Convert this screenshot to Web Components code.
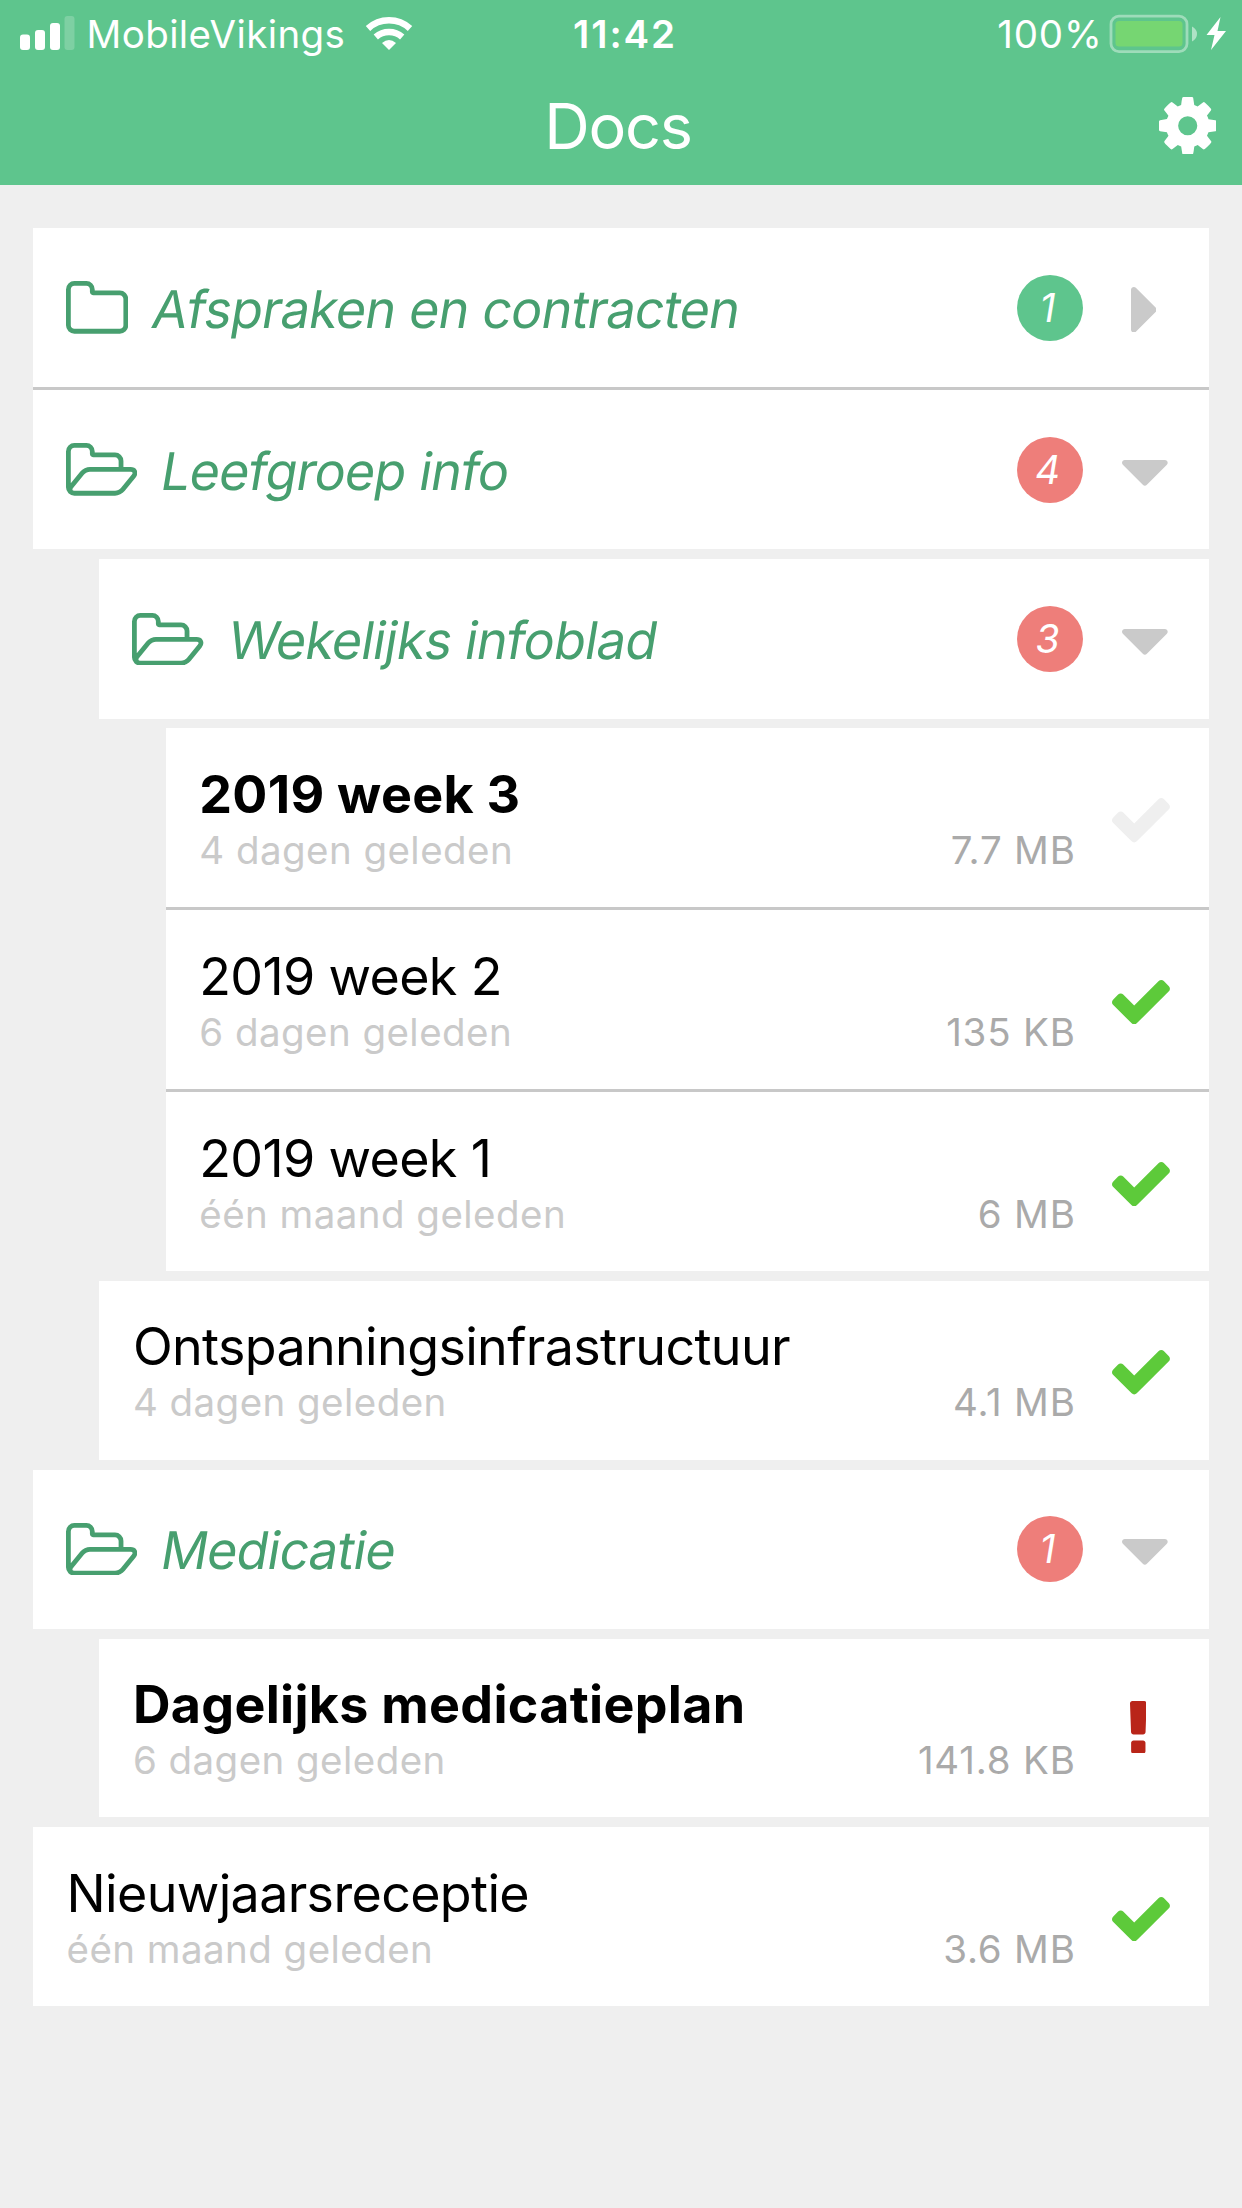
<!DOCTYPE html>
<html lang="nl">
<head>
<meta charset="utf-8">
<title>Docs</title>
<style>
    body {
        margin: 0;
        min-height: 2208px;
        background: #efefef;
        font-family: Inter, "Liberation Sans", sans-serif;
    }
</style>
</head>
<body>

<status-bar carrier="MobileVikings" time="11:42" battery="100%"></status-bar>
<title-bar>Docs</title-bar>

<doc-list>
    <doc-folder name="Afspraken en contracten" count="1" seen line></doc-folder>
    <doc-folder name="Leefgroep info" count="4" open>
        <doc-folder name="Wekelijks infoblad" count="3" open>
            <doc-file name="2019 week 3" age="4 dagen geleden" size="7.7 MB" state="new" unread line></doc-file>
            <doc-file name="2019 week 2" age="6 dagen geleden" size="135 KB" state="read" line></doc-file>
            <doc-file name="2019 week 1" age="één maand geleden" size="6 MB" state="read"></doc-file>
        </doc-folder>
        <doc-file name="Ontspanningsinfrastructuur" age="4 dagen geleden" size="4.1 MB" state="read"></doc-file>
    </doc-folder>
    <doc-folder name="Medicatie" count="1" open>
        <doc-file name="Dagelijks medicatieplan" age="6 dagen geleden" size="141.8 KB" state="urgent" unread></doc-file>
    </doc-folder>
    <doc-file name="Nieuwjaarsreceptie" age="één maand geleden" size="3.6 MB" state="read"></doc-file>
</doc-list>

<script>
// viewBox is cropped to the glyph, so the size follows from --em
const icons = {
    cog: [128, 128, 1536, 1536, 'M1152 896q0-106-75-181t-181-75-181 75-75 181 75 181 181 75 181-75 75-181zm512-109v222q0 12-8 23t-20 13l-185 28q-19 54-39 91 35 50 107 138 10 12 10 25t-9 23q-27 37-99 108t-94 71q-12 0-26-9l-138-108q-44 23-91 38-16 136-29 186-7 28-36 28h-222q-14 0-24.5-8.5t-11.5-21.5l-28-184q-49-16-90-37l-141 107q-10 9-25 9-14 0-25-11-126-114-165-168-7-10-7-23 0-12 8-23 15-21 51-66.5t54-70.5q-27-50-41-99l-183-27q-13-2-21-12.5t-8-23.5v-222q0-12 8-23t19-13l186-28q14-46 39-92-40-57-107-138-10-12-10-24 0-10 9-23 26-36 98.5-107.5t94.5-71.5q13 0 26 10l138 107q44-23 91-38 16-136 29-186 7-28 36-28h222q14 0 24.5 8.5t11.5 21.5l28 184q49 16 90 37l142-107q9-9 24-9 13 0 25 10 129 119 165 170 7 8 7 22 0 12-8 23-15 21-51 66.5t-54 70.5q26 50 41 98l183 28q13 2 21 12.5t8 23.5z'],
    folder: [64, 128, 1664, 1408, 'M1600 1312v-704q0-40-28-68t-68-28h-704q-40 0-68-28t-28-68v-64q0-40-28-68t-68-28h-320q-40 0-68 28t-28 68v960q0 40 28 68t68 28h1216q40 0 68-28t28-68zm128-704v704q0 92-66 158t-158 66h-1216q-92 0-158-66t-66-158v-960q0-92 66-158t158-66h320q92 0 158 66t66 158v32h672q92 0 158 66t66 158z'],
    folderOpen: [64, 128, 1909, 1408, 'M1845 931q0-35-53-35h-1088q-40 0-85.5 21.5t-71.5 52.5l-294 363q-18 24-18 40 0 35 53 35h1088q40 0 86-22t71-53l294-363q18-22 18-39zm-1141-163h768v-160q0-40-28-68t-68-28h-576q-40 0-68-28t-28-68v-64q0-40-28-68t-68-28h-320q-40 0-68 28t-28 68v853l256-315q44-53 116-87.5t140-34.5zm1269 163q0 62-46 120l-295 363q-43 53-116 87.5t-140 34.5h-1088q-92 0-158-66t-66-158v-960q0-92 66-158t158-66h320q92 0 158 66t66 158v32h544q92 0 158 66t66 158v160h192q54 0 99 24.5t67 70.5q15 32 15 68z'],
    caretRight: [576, 384, 576, 1024, 'M1152 896q0 26-19 45l-448 448q-19 19-45 19t-45-19-19-45v-896q0-26 19-45t45-19 45 19l448 448q19 19 19 45z'],
    caretDown: [384, 640, 1024, 576, 'M1408 704q0 26-19 45l-448 448q-19 19-45 19t-45-19l-448-448q-19-19-19-45t19-45 45-19h896q26 0 45 19t19 45z'],
    check: [121, 334, 1550, 1188, 'M1671 566q0 40-28 68l-724 724-136 136q-28 28-68 28t-68-28l-136-136-362-362q-28-28-28-68t28-68l136-136q28-28 68-28t68 28l294 295 656-657q28-28 68-28t68 28l136 136q28 28 28 68z'],
    exclamation: [674, 128, 444, 1408, 'M1088 1248v224q0 26-19 45t-45 19h-256q-26 0-45-19t-19-45v-224q0-26 19-45t45-19h256q26 0 45 19t19 45zm30-1056l-28 768q-1 26-20.5 45t-45.5 19h-256q-26 0-45.5-19t-20.5-45l-28-768q-1-26 17.5-45t44.5-19h320q26 0 44.5 19t17.5 45z']
}

class FaIcon extends HTMLElement {
    constructor() {
        super();
        this.attachShadow({mode: 'open'})
    }

    connectedCallback() {
        const [x, y, w, h, d] = icons[this.getAttribute('name')];
        this.shadowRoot.innerHTML = `
            <style>
                :host {
                    display: block;
                    flex: none;
                }

                svg {
                    display: block;
                    fill: currentColor;
                    width: calc(var(--em, 67px) * ${w / 1792});
                    height: calc(var(--em, 67px) * ${h / 1792});
                }
            </style>
            <svg viewBox="${x} ${y} ${w} ${h}"><path d="${d}"/></svg>
        `
    }
}


class StatusBar extends HTMLElement {
    constructor() {
        super();
        this.attachShadow({mode: 'open'})
    }

    connectedCallback() {
        this.shadowRoot.innerHTML = `
            <style>
                :host {
                    display: grid;
                    grid-template-columns: 1fr auto 1fr;
                    align-items: center;
                    box-sizing: border-box;
                    height: 68px;
                    padding: 0 16px 0 19px;
                    background: #5ec58d;
                    color: #fff;
                    font-size: 38.5px;
                    line-height: 68px;
                }

                div {
                    display: flex;
                    align-items: center;
                }

                svg {
                    display: block;
                    flex: none;
                }

                .carrier {
                    margin: 0 20px 0 11.5px;
                    letter-spacing: 0.4px;
                }

                .time {
                    padding-left: 5px;
                    font-weight: 600;
                    letter-spacing: 1.9px;
                }

                .right {
                    justify-content: flex-end;
                }

                .battery {
                    margin-right: 6.5px;
                    letter-spacing: 0.8px;
                }
            </style>
            <div>
                <svg width="56" height="68" fill="#fff">
                    <rect x="1" y="34.5" width="10" height="15.5" rx="3"/>
                    <rect x="16" y="30" width="10" height="20" rx="3"/>
                    <rect x="31" y="23" width="10" height="27" rx="3"/>
                    <rect x="45.5" y="16" width="10" height="34" rx="3" opacity=".2"/>
                </svg>
                <span class="carrier">${this.getAttribute('carrier')}</span>
                <svg width="48" height="68" fill="none" stroke="#fff">
                    <path d="M3 28.5A31 31 0 0 1 45 28.5" stroke-width="6.5"/>
                    <path d="M10.8 37A20 20 0 0 1 37.2 37" stroke-width="6.5"/>
                    <path d="M17 43Q24 37 31 43L24 50Z" fill="#fff" stroke="none"/>
                </svg>
            </div>
            <span class="time">${this.getAttribute('time')}</span>
            <div class="right">
                <span class="battery">${this.getAttribute('battery')}</span>
                <svg width="117" height="68">
                    <rect x="2" y="16.2" width="76" height="35.5" rx="8" fill="none" stroke="#fff" stroke-opacity=".4" stroke-width="2.8"/>
                    <rect x="6.5" y="21" width="67" height="25.5" rx="3.5" fill="#76d672"/>
                    <path d="M83 26.5Q88 29 88 34T83 41.5Z" fill="#fff" opacity=".5"/>
                    <path d="M111.5 17L97.5 35H105.5L102 50L117 31H108.5Z" fill="#fff"/>
                </svg>
            </div>
        `
    }
}


class TitleBar extends HTMLElement {
    constructor() {
        super();
        this.attachShadow({mode: 'open'})
        this.shadowRoot.innerHTML = `
            <style>
                :host {
                    display: grid;
                    grid-template-columns: 1fr auto 1fr;
                    align-items: center;
                    box-sizing: border-box;
                    height: 117px;
                    padding: 0 26px 0 20px;
                    background: #5ec58d;
                    color: #fff;
                }

                h1 {
                    grid-column: 2;
                    margin: 0;
                    font-size: 63px;
                    font-weight: 400;
                    letter-spacing: -1.3px;
                    line-height: 117px;
                }

                fa-icon {
                    justify-self: end;
                    margin-bottom: 2px;
                }
            </style>
            <h1><slot></slot></h1>
            <fa-icon name="cog"></fa-icon>
        `
    }
}


class DocList extends HTMLElement {
    constructor() {
        super();
        this.attachShadow({mode: 'open'})
        this.shadowRoot.innerHTML = `
            <style>
                :host {
                    display: block;
                    padding: 43px 33px 0;
                }
            </style>
            <slot></slot>
        `
    }
}


class DocFolder extends HTMLElement {
    constructor() {
        super();
        this.attachShadow({mode: 'open'})
    }

    connectedCallback() {
        const open = this.hasAttribute('open');
        this.shadowRoot.innerHTML = `
            <style>
                :host {
                    display: block;
                }

                :host([line]) .row {
                    border-bottom: 3px solid #c8c8c8;
                }

                :host([open]) {
                    margin-bottom: 9.94px;
                }

                .row {
                    display: flex;
                    align-items: center;
                    height: 159.2px;
                    padding: 0 33px;
                    background: #fff;
                    color: #479f6f;
                    font-size: 52px;
                }

                /* slanted roman, the real italic has other letter shapes */
                .name {
                    flex: 1;
                    margin-left: 22px;
                    padding-top: 3px;
                    letter-spacing: -0.8px;
                    white-space: nowrap;
                    transform: skewX(-9.5deg);
                    transform-origin: 0 77%;
                }

                .badge {
                    width: 66px;
                    height: 66px;
                    margin-right: 29px;
                    border-radius: 50%;
                    background: #ee7e7a;
                    color: #fff;
                    font-size: 39px;
                    font-style: italic;
                    line-height: 65px;
                    text-align: center;
                    text-indent: -5px;
                }

                :host([seen]) .badge {
                    background: #5ec58d;
                }

                .caret {
                    --em: 80px;
                    display: flex;
                    justify-content: center;
                    width: 66px;
                    margin-right: -2px;
                    padding-top: 6px;
                    color: #cacaca;
                }

                :host(:not([open])) .caret {
                    width: 63px;
                    margin-right: 1px;
                    padding-top: 4px;
                }

                .children {
                    margin: 9.94px 0 0 66.4px;
                }
            </style>
            <div class="row">
                <fa-icon name="${open ? 'folderOpen' : 'folder'}"></fa-icon>
                <span class="name">${this.getAttribute('name')}</span>
                <span class="badge">${this.getAttribute('count')}</span>
                <span class="caret"><fa-icon name="${open ? 'caretDown' : 'caretRight'}"></fa-icon></span>
            </div>
            ${open ? '<div class="children"><slot></slot></div>' : ''}
        `
    }
}


class DocFile extends HTMLElement {
    constructor() {
        super();
        this.attachShadow({mode: 'open'})
    }

    connectedCallback() {
        const icon = this.getAttribute('state') === 'urgent' ? 'exclamation' : 'check';
        this.shadowRoot.innerHTML = `
            <style>
                :host {
                    display: flex;
                    height: 178.8px;
                    background: #fff;
                }

                :host([line]) {
                    border-bottom: 3px solid #c8c8c8;
                }

                .text {
                    flex: 1;
                    padding: 35.5px 0 0 33.5px;
                    white-space: nowrap;
                }

                .name {
                    font-size: 52px;
                    letter-spacing: -0.65px;
                    line-height: 62px;
                }

                :host([unread]) .name {
                    font-weight: 700;
                    letter-spacing: 0.3px;
                }

                .meta {
                    display: flex;
                    justify-content: space-between;
                    font-size: 38.5px;
                    letter-spacing: 0.45px;
                    line-height: 49.5px;
                    color: #cacaca;
                }

                .size {
                    margin-right: -0.7px;
                    letter-spacing: 0.8px;
                    color: #aaa;
                }

                .state {
                    display: flex;
                    align-items: center;
                    justify-content: center;
                    box-sizing: border-box;
                    width: 134px;
                    padding: 5px 2px 0 0;
                    color: #5dca3a;
                }

                :host([state=new]) .state {
                    color: #efefef;
                }

                :host([state=urgent]) .state {
                    padding: 0 8px 2px 0;
                    color: #b92519;
                }
            </style>
            <div class="text">
                <div class="name">${this.getAttribute('name')}</div>
                <div class="meta">
                    <span>${this.getAttribute('age')}</span>
                    <span class="size">${this.getAttribute('size')}</span>
                </div>
            </div>
            <div class="state"><fa-icon name="${icon}"></fa-icon></div>
        `
    }
}


window.customElements.define('fa-icon', FaIcon);
window.customElements.define('status-bar', StatusBar);
window.customElements.define('title-bar', TitleBar);
window.customElements.define('doc-list', DocList);
window.customElements.define('doc-folder', DocFolder);
window.customElements.define('doc-file', DocFile);
</script>
</body>
</html>
